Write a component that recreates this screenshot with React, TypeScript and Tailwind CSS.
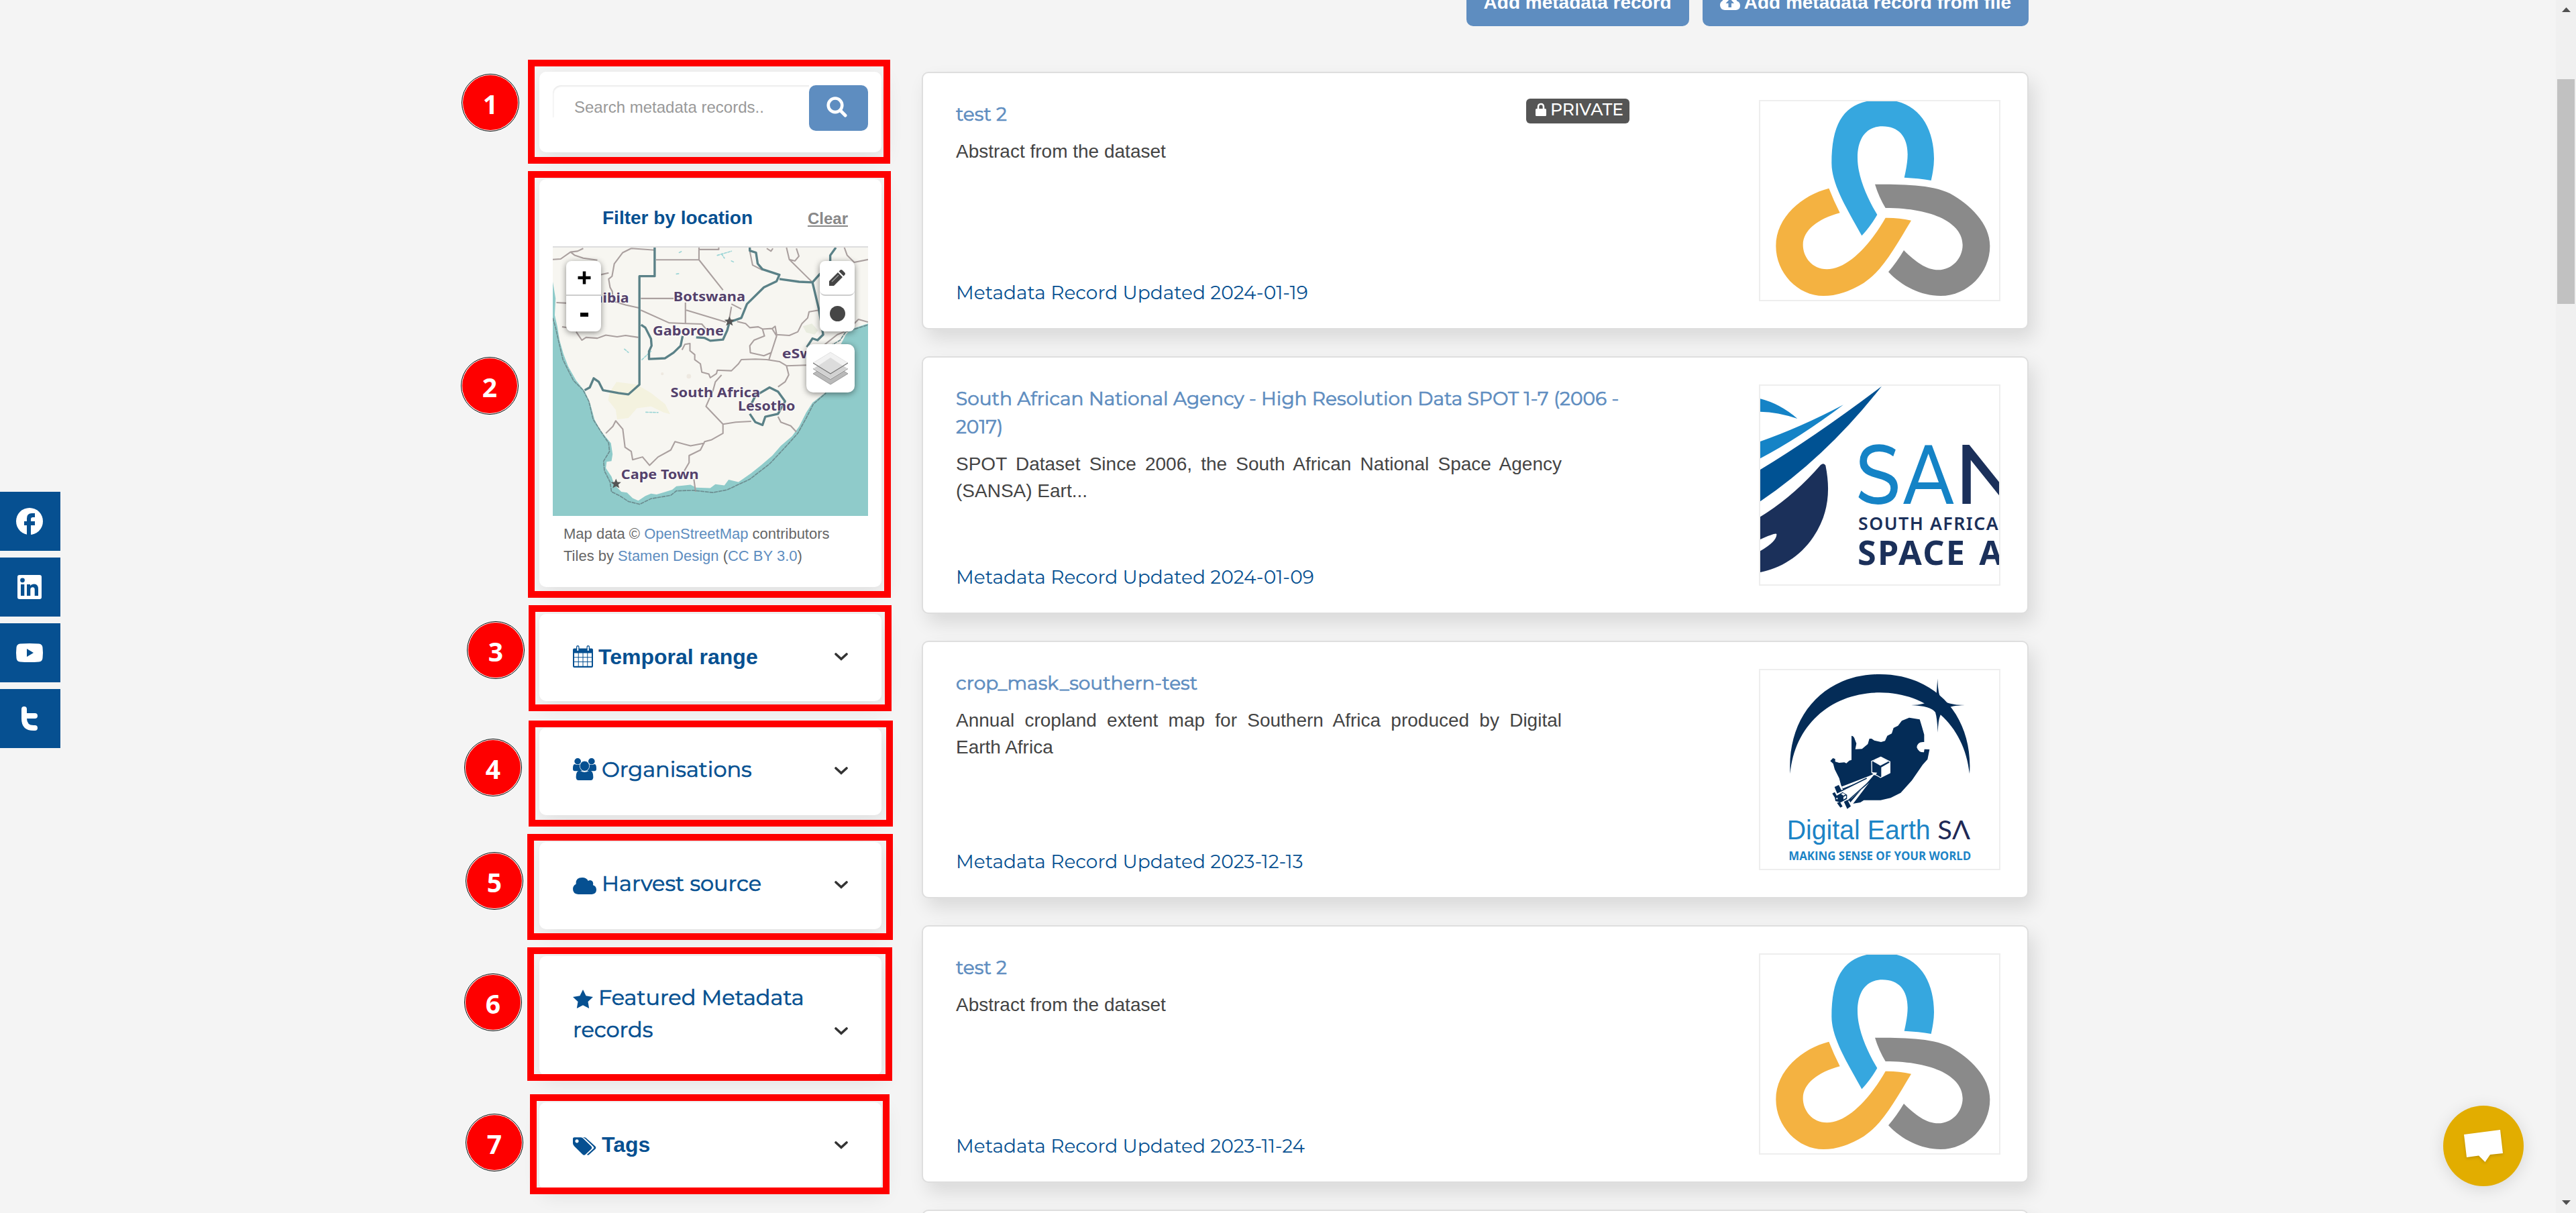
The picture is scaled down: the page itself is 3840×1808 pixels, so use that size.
import type { ReactNode } from 'react';

/* ---------- icons ---------- */

const CalendarIcon = () => (
  <svg viewBox="0 0 60 66" className="inline-block h-[33px] w-[30px]">
    <path fill="#065091" d="M4 9H10V4Q10 0 14.500 0T19 4V9H41V4Q41 0 45.500 0T50 4V9H56Q60 9 60 13V62Q60 66 56 66H4Q0 66 0 62V13Q0 9 4 9Z" />
    <g fill="#fff">
      {[23, 36.5, 50].map((y) =>
        [4, 17.5, 31, 44.5].map((x) => <rect key={`${x}-${y}`} x={x} y={y} width={11.500} height={11.500} />),
      )}
      <rect x="12.500" y="3" width="4" height="13" rx="1.500" />
      <rect x="43.500" y="3" width="4" height="13" rx="1.500" />
    </g>
  </svg>
);

const GroupIcon = () => (
  <svg viewBox="413 724 83 98" preserveAspectRatio="none" className="inline-block h-[33px] w-[35px]">
    <g fill="#065091">
      <ellipse cx="430" cy="738" rx="11.500" ry="14" />
      <ellipse cx="479" cy="738" rx="11.500" ry="14" />
      <path d="M413 768Q413 751 420 751Q430 757 439 751Q437 772 446 781H420Q413 781 413 772Z" />
      <path d="M496 768Q496 751 489 751Q479 757 470 751Q472 772 463 781H489Q496 781 496 772Z" />
      <ellipse cx="454.500" cy="759" rx="17" ry="22.500" stroke="#fff" strokeWidth="2" />
      <path d="M424 808Q424 780 437 780Q454 792 472 780Q485 780 485 808Q485 822 476 822H433Q424 822 424 808Z" />
    </g>
  </svg>
);

const CloudIcon = () => (
  <svg viewBox="413 1242 83 75" preserveAspectRatio="none" className="mb-[5px] inline-block h-[25px] w-[35px]">
    <path fill="#065091" d="M432 1317Q413 1315 413 1293Q413 1278 424 1271Q422 1242 446 1242Q461 1242 467 1257Q472 1253 477 1255Q487 1260 484 1276Q496 1281 496 1297Q496 1315 480 1317Z" />
  </svg>
);

const StarIcon = () => (
  <svg viewBox="413 397 72 84" preserveAspectRatio="none" className="mb-[3px] inline-block h-[28px] w-[30px]">
    <path fill="#065091" d="M449 397L460 425L485 430L467 451L471 481L449 467L427 481L431 451L413 430L438 425Z" />
  </svg>
);

const TagsIcon = () => (
  <svg viewBox="413 1058 82 82" preserveAspectRatio="none" className="mb-[3px] inline-block h-[27px] w-[35px]">
    <path fill="#065091" fillRule="evenodd" d="M413 1064Q413 1059 418 1059H440Q446 1059 451 1066L477 1099Q482 1106 477 1112L457 1136Q452 1142 447 1136L418 1099Q413 1093 413 1086ZM427 1068A6 8 0 1 0 427.100 1068Z" />
    <path fill="#065091" d="M448 1059H453Q458 1059 463 1066L491 1099Q496 1106 491 1112L470 1136Q466 1142 462 1137L485 1110Q488 1106 485 1101L456 1065Z" />
  </svg>
);

const ChevronIcon = () => (
  <svg viewBox="0 0 20 12" className="h-[12px] w-[20px] shrink-0">
    <path d="M2 2L10 9.300L18 2" fill="none" stroke="#333" strokeWidth="3.600" strokeLinecap="round" />
  </svg>
);

const SearchIcon = () => (
  <svg viewBox="0 0 31 31" className="size-[31px]">
    <circle cx="13" cy="12.800" r="10.300" fill="none" stroke="#fff" strokeWidth="4.600" />
    <path d="M20.500 20.500L28 28" stroke="#fff" strokeWidth="5" strokeLinecap="round" />
  </svg>
);

const UploadIcon = () => (
  <svg viewBox="0 0 30 22" className="mr-[6px] h-[22px] w-[30px]">
    <path fill="#fff" d="M7 22Q0 21 0 14.500Q0 10 4 8Q4 0 11.500 0Q17 0 19 5Q24 3 25 8.500Q30 10 30 15.500Q30 21 24 22Z" />
    <path fill="#5e8dc0" d="M15 5L21 12H17V18H12.500V12H8.500Z" />
  </svg>
);

const LockIcon = () => (
  <svg viewBox="0 0 16 20" className="h-[20px] w-[16px]">
    <path d="M4 10V6.500Q4 2 8 2T12 6.500V10" fill="none" stroke="#fff" strokeWidth="2.600" />
    <rect y="9" width="16" height="11" rx="1.500" fill="#fff" />
  </svg>
);

const socials: { name: string; icon: ReactNode }[] = [
  {
    name: 'Facebook',
    icon: (
      <>
        <circle cx="24" cy="24" r="20" fill="#fff" />
        <path fill="#065091" d="M20 44.500V30H16V24H20V19.500Q20 12 27.500 12H32V18H29Q26 18 26 21V24H32V30H26V44.500Z" />
      </>
    ),
  },
  {
    name: 'LinkedIn',
    icon: (
      <>
        <rect x="6" y="6" width="36" height="36" rx="3" fill="#fff" />
        <g fill="#065091">
          <circle cx="13.500" cy="13.800" r="3.400" />
          <rect x="11" y="20" width="5.300" height="17" />
          <path d="M20 20H25V22.300Q27 19.500 31 19.500Q37 19.500 37 27V37H31.700V28Q31.700 24.300 28.800 24.300Q25.300 24.300 25.300 28V37H20Z" />
        </g>
      </>
    ),
  },
  {
    name: 'YouTube',
    icon: (
      <>
        <path fill="#fff" d="M10 10.500Q24 9.500 38 10.500Q43 11 43.500 16Q44.500 24 43.500 32Q43 37 38 37.500Q24 38.500 10 37.500Q5 37 4.500 32Q3.500 24 4.500 16Q5 11 10 10.500Z" />
        <path fill="#065091" d="M20 18V30L30 24Z" />
      </>
    ),
  },
  {
    name: 'Twitter',
    icon: (
      <path
        d="M16 10V24Q16 38 30 38H32M16 20H32"
        fill="none"
        stroke="#fff"
        strokeWidth="8"
        strokeLinecap="round"
      />
    ),
  },
];

/* ---------- map ---------- */

const Star = ({ x, y }: { x: number; y: number }) => (
  <path
    transform={`translate(${x} ${y})`}
    fill="#555"
    d="M0 -18L5 -6L18 -5L8 3L12 16L0 9L-12 16L-8 3L-18 -5L-5 -6Z"
  />
);

const places: [string, number, number, number][] = [
  ['Botswana', 769, 479, 255],
  ['Gaborone', 696, 604, 252],
  ['eSwatini', 1154, 686, 236],
  ['South Africa', 759, 825, 318],
  ['Lesotho', 998, 874, 203],
  ['Cape Town', 584, 1120, 275],
  ['Namibia', 398, 486, 214],
];

const MapCanvas = () => (
  <svg viewBox="342 287 1117 965" preserveAspectRatio="none" className="block h-[400px] w-[470px]">
    <rect x="342" y="287" width="1117" height="965" fill="#8fcbca" />
    <path
      fill="#f7f6f1"
      d="M342 287V410L352 470L349 530L358 570L366 620L380 670L397 715L425 765L455 803L475 850L490 905L508 940L527 965L548 990L554 1030L550 1055L533 1057L530 1080L550 1110L560 1140L585 1165L605 1168L625 1188L645 1197L670 1180L690 1172L710 1175L740 1166L765 1158L780 1145L830 1140L850 1150L900 1152L918 1138L950 1142L965 1122L1000 1130L1045 1098L1080 1070L1120 1035L1150 1000L1190 965L1215 930L1240 880L1262 845L1300 815L1330 790L1350 700L1360 640L1380 600L1400 580L1459 560V287Z"
    />
    <path fill="#f4f2df" d="M568 770L640 780L690 810L740 850L758 886L735 880L690 858L640 865L610 900L570 905L565 870L538 835L545 805Z" />
    <g fill="#eee9e1">
      <circle cx="824" cy="750" r="8" />
      <circle cx="730" cy="741" r="5" />
      <path fill="#e9ecdf" d="M1228 570L1260 560L1282 585L1270 600L1240 592Z" />
    </g>
    <g stroke="#9bd5d6" strokeWidth="4" strokeLinecap="round" strokeDasharray="8 5" fill="none">
      <path d="M940 310L950 325M925 315L975 300M975 335L985 340M790 305L800 300M672 879L715 880M596 652L610 664M780 382L792 380M658 690L690 660" />
    </g>
    <g fill="none" stroke="#aaa09f" strokeWidth="5" strokeLinejoin="round">
      <path d="M342 330L370 328L405 303L430 300L450 290M405 303L420 315L450 325L500 332M620 290L590 305L560 345L552 390L540 400L545 430L553 445L556 480L600 493L648 504M620 290L703 296M355 485L395 487M510 385L540 378M375 572L395 575M425 590L445 620L460 610L500 613L530 602L570 608L600 603L645 610" />
      <path d="M708 331H860V287M860 294H930V287M860 331L945 440M654 470H770M812 485V560M654 512L755 558L870 562L885 580M815 512L955 555M975 500L968 540M975 490L1010 508" />
      <path d="M1040 300L1050 350L1085 368M1170 287L1180 330L1235 385L1262 412M1180 330L1200 335L1214 318L1205 290M1375 287L1385 315L1410 340L1459 330M1100 290L1115 300L1122 290" />
      <path d="M995 553L1025 560L1040 575L1070 572L1085 580L1120 578L1130 570L1135 600L1180 603L1210 590L1225 560L1245 540L1250 518L1285 512M1120 580L1135 605L1108 690M1085 580L1092 605L1055 620L1040 640L1042 665L1090 676L1115 665" />
      <path d="M800 655L810 635L828 632L828 658L845 672L845 690L865 705L870 735L895 742L900 755L922 740L925 728L975 730L1000 705L1010 690L1060 688L1100 690L1145 697L1170 712L1240 710M1170 712L1178 745L1165 770L1140 788M940 745L918 770L910 800L885 858L915 890L945 922L990 915L1045 912M945 922V955L905 978L880 985L865 1015L825 1035L825 1060L808 1090M880 990L830 1000L775 985L760 1015L715 1040L685 1070L660 1040L625 1050L620 1020L598 1005L590 940L565 910L555 930L530 955M1140 895L1150 915L1185 928L1205 950M842 1120L848 1165" />
      <path d="M1410 560L1425 545L1459 555M1300 640L1350 600L1375 590" />
    </g>
    <g fill="none" stroke="#5a8187" strokeWidth="8" strokeLinejoin="round">
      <path d="M703 287V390H649V780L610 815L575 810L520 800L505 770L487 757L473 790L455 800" />
      <path d="M655 565L670 575L690 615L692 640L683 660L683 688L740 685L770 665L795 640L802 605M850 610L880 612L900 622L945 618L960 585L968 555L1010 540L1030 490L1090 430L1135 408L1145 385L1085 365L1068 345L1062 305L1040 298V287M1145 400L1215 410L1262 412L1290 380M1262 412L1285 510L1300 600L1280 620L1262 614L1242 645M1325 340V315L1345 287" />
      <path d="M1040 860L1060 820L1110 790L1140 805L1165 840L1140 885L1095 895L1085 925L1060 915L1040 885" />
    </g>
    <path
      fill="none"
      stroke="#6c8d90"
      strokeWidth="4"
      strokeDasharray="14 2"
      d="M342 540L352 575L363 625L378 690L415 765L450 800L470 840L485 905L520 960L540 990L543 1020L522 1055L525 1090L545 1130L550 1165L580 1180L610 1200L650 1210L690 1190L760 1178L780 1162L840 1160L910 1168L960 1158L1040 1120L1110 1065L1170 1000L1210 955L1240 900L1265 850L1310 810M1310 650L1360 620L1380 590L1459 565"
    />
    <g fill="#54416b" stroke="#fff" strokeWidth="5" strokeOpacity="0.600" paintOrder="stroke" className="font-['Noto_Sans'] text-[48px] font-bold">
      {places.map(([name, x, y, w]) => (
        <text key={name} x={x} y={y} textLength={w} lengthAdjust="spacingAndGlyphs">
          {name}
        </text>
      ))}
    </g>
    <Star x={968} y={552} />
    <Star x={566} y={1136} />
  </svg>
);

const ctrlShadow = 'shadow-[0_2px_10px_rgba(0,0,0,0.45)]';

const LocationMap = () => (
  <div className="relative border-t-2 border-[#ddd]">
    <MapCanvas />
    <div className={`absolute left-[20px] top-[20px] flex h-[105px] w-[52px] flex-col rounded-[8px] bg-white ${ctrlShadow}`}>
      <div className="flex h-[52px] items-center justify-center border-b-2 border-[#ccc] pl-[2px]">
        <svg viewBox="0 0 20 20" className="size-[20px]"><path d="M10 0.500V19.500M0.500 10H19.500" stroke="#000" strokeWidth="4.500" /></svg>
      </div>
      <div className="flex h-[53px] items-center justify-center pl-[2px] pt-[2px]">
        <svg viewBox="0 0 12 6" className="h-[6px] w-[12px]"><path d="M0 3H12" stroke="#000" strokeWidth="6" /></svg>
      </div>
    </div>
    <div className={`absolute right-[20px] top-[20px] flex h-[105px] w-[52px] flex-col rounded-[8px] bg-white ${ctrlShadow}`}>
      <div className="flex h-[52px] items-center justify-center rounded-b-[8px] border-b-2 border-[#ccc]">
        <svg viewBox="0 0 24 24" className="size-[24px]">
          <path fill="#444" d="M0 24V17L13 4L20 11L7 24ZM14.500 2.500L16 1Q18 -1 20 1L23 4Q25 6 23 8L21.500 9.500Z" />
          <path d="M4 18L14 8" stroke="#999" strokeWidth="1.500" />
        </svg>
      </div>
      <div className="flex h-[53px] items-center justify-center">
        <div className="size-[23px] rounded-full bg-[#464646]" />
      </div>
    </div>
    <div className={`absolute right-[20px] top-[144px] flex size-[72px] items-center justify-center rounded-[10px] bg-white ${ctrlShadow}`}>
      <svg viewBox="0 0 52 50" className="h-[50px] w-[52px]">
        <path fill="#b9b9b9" stroke="#8a8a8a" strokeWidth="0.800" d="M0 33L26 17L52 33L26 49Z" />
        <path fill="#d2d2d2" stroke="#fff" strokeWidth="1" d="M0 25L26 9L52 25L26 41Z" />
        <path fill="none" stroke="#8a8a8a" strokeWidth="1" d="M0 25.500L26 41.500L52 25.500" />
        <path fill="#f2f2f2" stroke="#ccc" strokeWidth="0.500" d="M0 17L26 1L52 17L26 33Z" />
        <path fill="#dcdcdc" d="M8 21L26 9L44 21L26 32Z" />
        <path fill="none" stroke="#777" strokeWidth="1.300" d="M0 17L26 33L52 17" />
      </svg>
    </div>
  </div>
);

/* ---------- sidebar ---------- */

const Callout = ({ n, frame, dot }: { n: number; frame: string; dot: string }) => (
  <>
    <div className={`pointer-events-none absolute z-10 border-[10px] border-[#fe0000] ${frame}`} />
    <div className={`absolute z-10 flex size-[86px] items-center justify-center rounded-full border border-black bg-white p-px ${dot}`}>
      <div className="flex size-full items-center justify-center rounded-full bg-[#fe0000] pt-[2px] font-['Open_Sans'] text-[39px] font-bold leading-none text-white">
        {n}
      </div>
    </div>
  </>
);

const Panel = ({ className = '', children }: { className?: string; children: ReactNode }) => (
  <section className={`relative rounded-[10px] bg-white shadow-[4px_8px_30px_rgba(0,0,0,0.09)] ${className}`}>{children}</section>
);

type Facet = { n: number; icon: ReactNode; label: ReactNode; text: string; size: string; frame: string; dot: string };

const arial = "font-['Arial','Liberation_Sans',sans-serif] font-bold";
const display = "font-['Montserrat','Inter',sans-serif]";
/* Regular letterforms slightly emboldened, keeping the regular advance widths. */
const heavier = 'font-normal [-webkit-text-stroke:0.7px_currentColor]';

const facets: Facet[] = [
  { n: 3, icon: <CalendarIcon />, label: 'Temporal range', text: `-mb-[2px] pt-[2px] ${arial}`, size: 'h-[130px]', frame: '-left-[16px] -top-[13px] h-[158px] w-[541px]', dot: '-left-[108px] top-[11px]' },
  { n: 4, icon: <GroupIcon />, label: 'Organisations', text: `${display} ${heavier}`, size: 'h-[130px]', frame: '-left-[16px] -top-[11px] h-[158px] w-[543px]', dot: '-left-[112px] top-[16px]' },
  { n: 5, icon: <CloudIcon />, label: 'Harvest source', text: `${display} ${heavier}`, size: 'h-[130px]', frame: '-left-[18px] -top-[12px] h-[158px] w-[545px]', dot: '-left-[110px] top-[15px]' },
  { n: 6, icon: <StarIcon />, label: <>Featured Metadata<br />records</>, text: `${display} ${heavier}`, size: 'h-[178px]', frame: '-left-[18px] -top-[13px] h-[199px] w-[544px]', dot: '-left-[112px] top-[26px]' },
  { n: 7, icon: <TagsIcon />, label: 'Tags', text: `-mb-px pt-px ${arial}`, size: 'h-[130px]', frame: '-left-[14px] -top-[12px] h-[149px] w-[536px]', dot: '-left-[110px] top-[17px]' },
];

const Sidebar = () => (
  <aside className="flex w-[510px] shrink-0 flex-col gap-[40px]">
    <Panel className="h-[120px] p-[20px]">
      <div className="flex h-[68px]">
        <div className="flex-1 rounded-tl-[12px] pl-[32px] text-[24px] leading-[66px] text-[#999] shadow-[inset_1px_2px_2px_rgba(0,0,0,0.08)] [clip-path:inset(0_0_20px_0)]">
          Search metadata records..
        </div>
        <button className="flex w-[88px] items-center justify-center rounded-[10px] bg-[#5e8dc0] pb-[4px] pr-[6px]">
          <SearchIcon />
        </button>
      </div>
      <Callout n={1} frame="-left-[17px] -top-[18px] h-[155px] w-[540px]" dot="-left-[116px] top-[3px]" />
    </Panel>

    <Panel className="h-[608px] px-[20px]">
      <div className="flex h-[100px] items-baseline justify-between pl-[74px] pr-[30px] pt-[38px] font-bold">
        <h2 className="text-[28px] leading-[40px] text-[#065091]">Filter by location</h2>
        <a className="text-[24px] leading-[40px] text-[#888] underline decoration-2 underline-offset-[2px]">Clear</a>
      </div>
      <LocationMap />
      <p className="pl-[16px] pt-[10px] text-[22px] leading-[33px] text-[#666]">
        Map data © <a className="text-[#5e8dc0]">OpenStreetMap</a> contributors
        <br />
        Tiles by <a className="text-[#5e8dc0]">Stamen Design</a> (<a className="text-[#5e8dc0]">CC BY 3.0</a>)
      </p>
      <Callout n={2} frame="-left-[17px] -top-[12px] h-[636px] w-[541px]" dot="-left-[117px] top-[265px]" />
    </Panel>

    {facets.map((f) => (
      <Panel key={f.n} className={f.size}>
        <div className="flex items-end justify-between px-[50px] pt-[38px]">
          <h2 className={`whitespace-nowrap text-[32px] leading-[48px] text-[#065091] ${f.text}`}>
            <span className="mr-[8px] inline-flex h-[33px] items-end align-[-5px]">{f.icon}</span>
            {f.label}
          </h2>
          <span className="mb-[16px]">
            <ChevronIcon />
          </span>
        </div>
        <Callout n={f.n} frame={f.frame} dot={f.dot} />
      </Panel>
    ))}
  </aside>
);

/* ---------- thumbnails ---------- */

const KnotLogo = () => (
  <svg viewBox="72 183 1068 888" className="size-full">
    <path fill="#36a7df" d="M526 784C470 680 391 560 391 460C391 260 460 176 620 176C780 176 849 300 849 440Q849 480 836 537Q780 527 716 524Q731 460 731 420C731 340 690 295 618 295C545 295 507 350 507 435C507 520 550 615 595 690Q565 742 526 784Z" />
    <path fill="#f4b241" d="M379 572Q400 626 428 682C330 708 263 760 263 825C263 880 305 934 370 934C460 934 560 830 632 704Q690 703 747 716C680 826 620 940 535 995Q440 1053 355 1053C240 1053 142 950 142 830C142 700 260 602 379 572Z" />
    <path fill="#8a8a8a" d="M585 554C700 554 840 554 920 595C1010 645 1099 730 1099 830C1099 950 1000 1053 878 1053C790 1053 705 1010 645 946Q684 900 714 849C765 900 815 937 868 937C930 937 977 885 977 825C977 730 850 660 632 660Q602 610 585 554Z" />
  </svg>
);

const SansaLogo = () => (
  <svg viewBox="72 75 1068 888" className="size-full">
    <g fill="#1583c6">
      <path d="M72 133Q160 155 238 222Q150 192 72 191Z" />
      <path d="M72 324Q250 262 444 160Q250 306 72 400Z" />
    </g>
    <path fill="#005293" d="M72 450Q320 300 615 77Q370 390 72 592Z" />
    <path fill="#1b305a" d="M72 661Q220 570 342 429Q356 417 364 431C390 560 370 660 310 750C250 840 160 892 72 909V814Q148 770 145 738Q142 730 72 762Z" />
    <g className="font-['Montserrat','Lato'] text-[374px] font-medium">
      <text x="498" y="603" fill="#1583c6" textLength="202" lengthAdjust="spacingAndGlyphs">S</text>
      <text x="712" y="603" fill="#1583c6" textLength="225" lengthAdjust="spacingAndGlyphs">A</text>
      <text x="937" y="603" fill="#1b305a">N</text>
    </g>
    <g fill="#1b305a" className="font-['Noto_Sans']">
      <text x="510" y="720" textLength="626" className="text-[80px] font-semibold">SOUTH AFRICA</text>
      <g className="text-[151px] font-bold">
        <text x="507" y="876" textLength="480">SPACE</text>
        <text x="1051" y="876">A</text>
      </g>
    </g>
  </svg>
);

const DigitalEarthLogo = () => (
  <svg viewBox="72 87 1068 888" className="size-full">
    <g fill="#042c57">
      <path d="M206 550C190 300 350 105 606 105C862 105 1025 300 1008 550C985 330 820 187 606 187C392 187 225 330 206 550Z" />
      <path d="M865 124Q866 190 880 215Q905 242 987 243Q920 246 915 256Q878 275 876 292Q868 310 866 365Q863 300 855 275Q835 247 747 243Q810 243 830 220Q858 205 860 190Z" />
      <path d="M385 493L397 480L407 484V496L425 501L448 499L457 503L470 491L480 488V380Q492 382 495 397L502 415L497 440L527 439L553 417L560 393H570L582 401L612 408L630 403L640 380L660 370L668 345L688 335L705 313L738 299L785 307L795 340L805 375V408Q775 405 772 432Q780 455 804 454L806 440L829 441L820 485L798 510L750 580L700 635L655 658L610 668L535 668L520 678L480 685L455 650L433 600L425 570L405 530L398 505Z" />
    </g>
    <path fill="#fff" d="M585 550L434 608L443 615L535 578L440 632L458 672L480 660L560 588L484 688L470 684Z" />
    <path fill="#fff" d="M590 545L438 625L455 665Z" />
    <path stroke="#042c57" strokeWidth="5" d="M435 626L548 570M462 672L560 585" />
    <path fill="#042c57" stroke="#fff" strokeWidth="4" strokeLinejoin="round" d="M570 494L611 475L652 496V546L610 567L571 545Z" />
    <path fill="#fff" d="M575 494L611 474L645 495L609 514ZM613 521L652 499V546L613 566ZM571 543L595 545L585 558Z" />
    <g fill="#042c57">
      <path d="M404 609L423 600L437 628L416 638ZM394 638L405 632L416 652L406 658ZM446 675L462 667L477 695L461 707ZM415 680L428 675L440 696L430 701Z" />
      <path d="M405 653L440 632L460 644V662L432 678L408 672Z" />
      <path fill="#fff" d="M433 640L442 636L453 643L444 648ZM444 653L456 647V658L444 665ZM412 658H418V664H412Z" />
    </g>
    <g fill="#1c84c6">
      <text x="191" y="843" textLength="642" lengthAdjust="spacingAndGlyphs" className="font-['Liberation_Sans'] text-[124px]">Digital Earth</text>
      <text x="199" y="936" textLength="816" lengthAdjust="spacingAndGlyphs" className="font-['Open_Sans'] text-[53px] font-bold">MAKING SENSE OF YOUR WORLD</text>
    </g>
    <text x="865" y="843" fill="#1f2a57" textLength="146" lengthAdjust="spacingAndGlyphs" className="font-['Lato'] text-[116px]">SΛ</text>
  </svg>
);

/* ---------- records ---------- */

type RecordItem = { title: ReactNode; text: string; date: string; logo: ReactNode; isPrivate?: boolean };

const records: RecordItem[] = [
  { title: 'test 2', text: 'Abstract from the dataset', date: '2024-01-19', logo: <KnotLogo />, isPrivate: true },
  { title: <>South African National Agency - High Resolution Data SPOT 1-7 (2006 -<br />2017)</>, text: 'SPOT Dataset Since 2006, the South African National Space Agency (SANSA) Eart...', date: '2024-01-09', logo: <SansaLogo /> },
  { title: 'crop_mask_southern-test', text: 'Annual cropland extent map for Southern Africa produced by Digital Earth Africa', date: '2023-12-13', logo: <DigitalEarthLogo /> },
  { title: 'test 2', text: 'Abstract from the dataset', date: '2023-11-24', logo: <KnotLogo /> },
];

const cardBox = 'rounded-[10px] border-2 border-[#dedede] bg-white shadow-[8px_14px_28px_rgba(0,0,0,0.11)]';

const RecordCard = ({ r }: { r: RecordItem }) => (
  <article className={`flex h-[384px] shrink-0 items-start justify-between pl-[49px] pr-[40px] pt-[40px] ${cardBox}`}>
    <div className="flex h-[307px] w-[1004px] flex-col">
      <div className="flex items-start justify-between">
        <h3 className={`whitespace-nowrap text-[28px] leading-[42px] text-[#5e8dc0] ${display} ${heavier}`}>{r.title}</h3>
        {r.isPrivate && (
          <span className={`-mt-[2px] flex h-[37px] w-[154px] shrink-0 items-center gap-[6px] rounded-[6px] bg-[#555] pl-[14px] text-[25px] font-medium leading-none text-white ${display}`}>
            <span className="-mt-[6px]"><LockIcon /></span>
            <span className="-mt-[5px]">PRIVATE</span>
          </span>
        )}
      </div>
      <p className="mt-[15px] w-[903px] text-justify text-[28px] leading-[40px] text-[#444]">{r.text}</p>
      <p className={`mt-auto whitespace-nowrap text-[28px] leading-[40px] text-[#065091] ${display}`}>
        Metadata Record Updated {r.date}
      </p>
    </div>
    <div className="h-[300px] w-[360px] overflow-hidden border-2 border-[#eee]">{r.logo}</div>
  </article>
);

/* ---------- page ---------- */

const actionBtn = 'flex h-[70px] items-center rounded-[10px] bg-[#5e8dc0] px-[26px] text-[28px] font-bold leading-[40px] text-white';

export default function App() {
  return (
    <div className="relative flex h-[1808px] w-[3840px] overflow-hidden bg-[#f4f4f4] font-['Arial','Liberation_Sans',sans-serif]">
      <div className="flex-1">
        <div className="flex h-[39px] items-end justify-end gap-[20px] pr-[786px]">
          <button className={actionBtn}>Add metadata record</button>
          <button className={actionBtn}>
            <UploadIcon />
            Add metadata record from file
          </button>
        </div>
        <div className="flex gap-[60px] pl-[804px] pt-[68px]">
          <Sidebar />
          <main className="flex w-[1650px] flex-col gap-[40px]">
            {records.map((r, i) => (
              <RecordCard key={i} r={r} />
            ))}
            <div className={`h-[100px] ${cardBox}`} />
          </main>
        </div>
      </div>

      <div className="flex w-[30px] flex-col items-center bg-[#f0f0f0]">
        <svg viewBox="0 0 13 7" className="mt-[11px] h-[7px] w-[13px]"><path fill="#505050" d="M0 7L6.500 0L13 7Z" /></svg>
        <div className="mt-[100px] h-[335px] w-[26px] bg-[#c1c1c1]" />
        <svg viewBox="0 0 13 7" className="mb-[12px] mt-auto h-[7px] w-[13px]"><path fill="#505050" d="M0 0L6.500 7L13 0Z" /></svg>
      </div>

      <nav className="absolute left-0 top-[733px] flex flex-col gap-[10px]">
        {socials.map((s) => (
          <a key={s.name} aria-label={s.name} className="flex h-[88px] w-[90px] items-center bg-[#065091] pl-[20px]">
            <svg viewBox="0 0 48 48" className="size-[48px]">{s.icon}</svg>
          </a>
        ))}
      </nav>

      <button aria-label="Chat" className="absolute left-[3642px] top-[1648px] flex size-[120px] items-center justify-center rounded-full bg-[#e2ad00] shadow-[0_4px_24px_rgba(0,0,0,0.12)]">
        <svg viewBox="0 0 58 48" className="h-[48px] w-[58px] drop-shadow-[0_2px_2px_rgba(0,0,0,0.15)]">
          <path fill="#fff" d="M0 7L54 0L58 35L39 37L31.500 48L22 38.500L4 41Z" />
        </svg>
      </button>
    </div>
  );
}
